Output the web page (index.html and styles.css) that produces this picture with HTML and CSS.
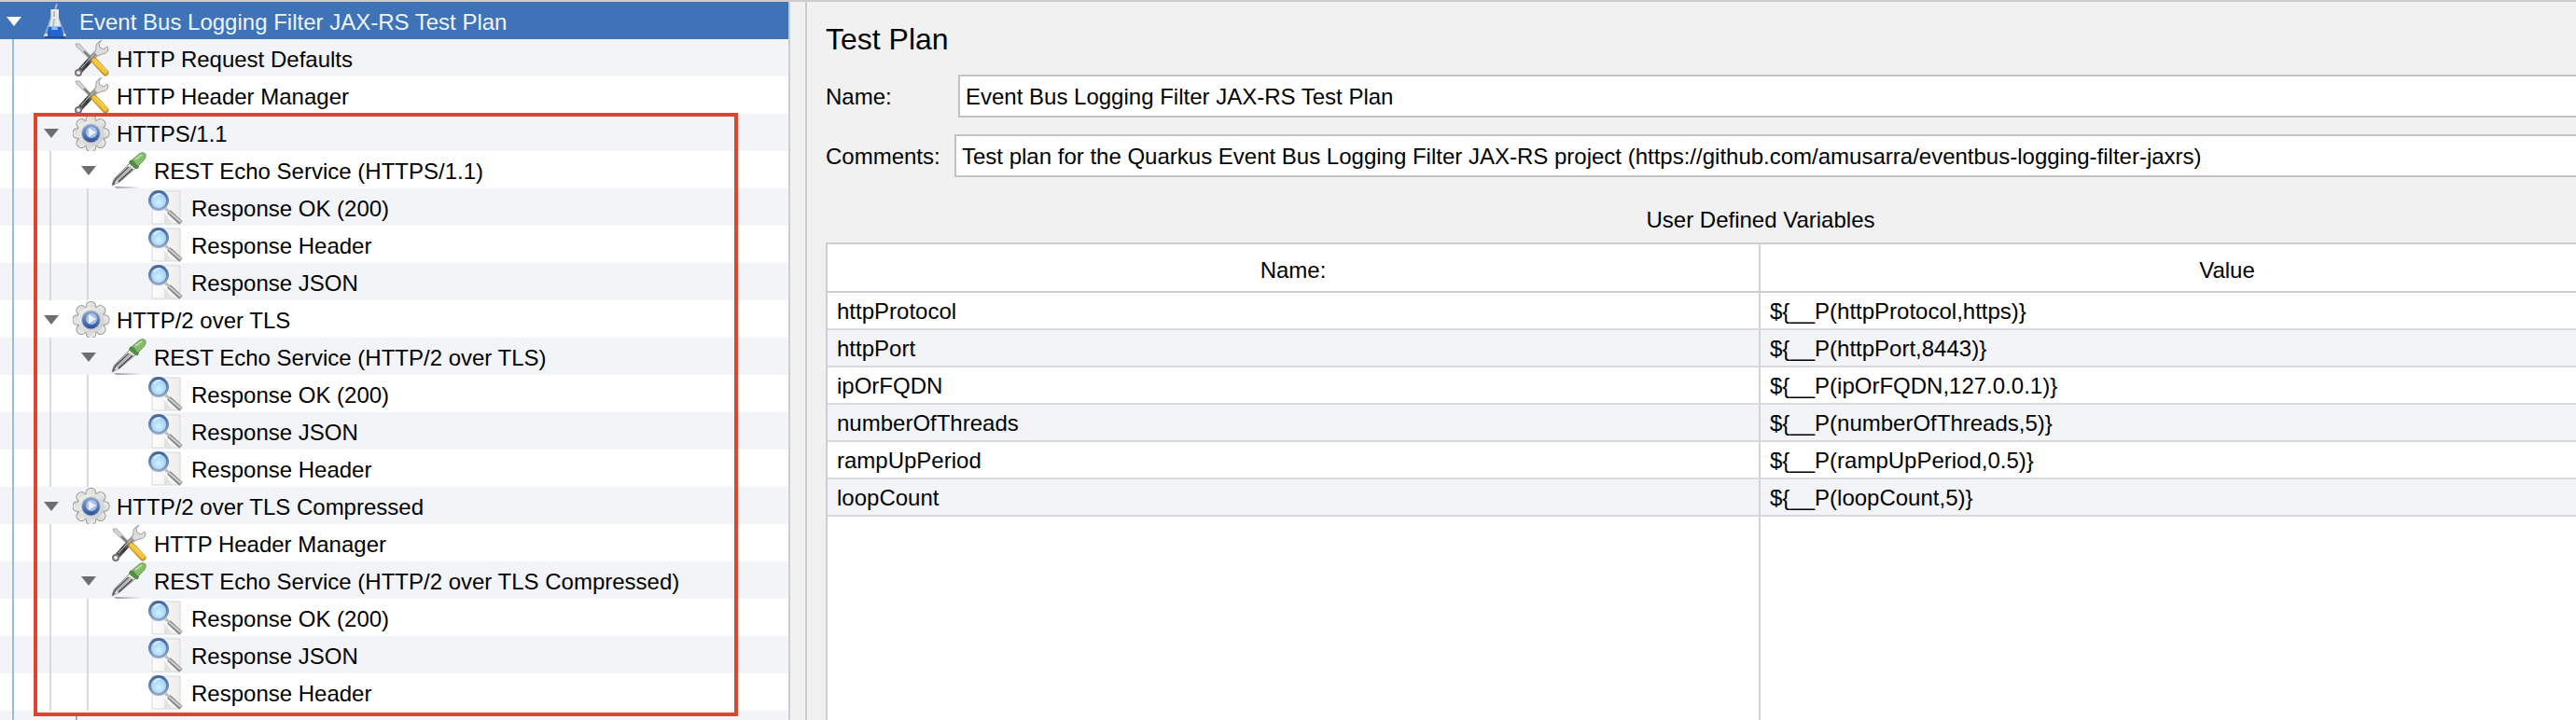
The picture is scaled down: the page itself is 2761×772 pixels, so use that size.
FILE: index.html
```html
<!DOCTYPE html>
<html lang="en">
<head>
<meta charset="utf-8">
<title>Event Bus Logging Filter JAX-RS Test Plan</title>
<link rel="stylesheet" href="styles.css">
</head>
<body>
<svg class="sprite" aria-hidden="true">
  <defs>
    <linearGradient id="glass" x1="0" x2="1"><stop offset="0" stop-color="#7f9fd0"/><stop offset=".5" stop-color="#f4f6f4"/><stop offset="1" stop-color="#7595c6"/></linearGradient>
    <linearGradient id="metal" x1="0" y1="0" x2="1" y2="1"><stop offset="0" stop-color="#f2f2f2"/><stop offset="1" stop-color="#cbcbc9"/></linearGradient>
    <linearGradient id="hub" x1="0" y1="0" x2="0" y2="1"><stop offset="0" stop-color="#8aa6d4"/><stop offset="1" stop-color="#2f5199"/></linearGradient>
    <linearGradient id="grip" gradientUnits="userSpaceOnUse" x1="30" y1="10" x2="5" y2="37"><stop offset="0" stop-color="#c4c4c4"/><stop offset=".35" stop-color="#8a8a8a"/><stop offset=".6" stop-color="#343434"/><stop offset="1" stop-color="#6a6a6a"/></linearGradient>
    <radialGradient id="lens" cx=".5" cy=".6" r=".6"><stop offset="0" stop-color="#d2f0ff"/><stop offset="1" stop-color="#94c8f0"/></radialGradient>
    <linearGradient id="ring" x1="0" y1="0" x2="0" y2="1"><stop offset="0" stop-color="#45659f"/><stop offset="1" stop-color="#8fa9c9"/></linearGradient>
    <linearGradient id="sheet" x1="0" x2="1"><stop offset="0" stop-color="#fdfdfd"/><stop offset="1" stop-color="#ededed"/></linearGradient>
    <linearGradient id="shade" x1="0" x2="1"><stop offset="0" stop-color="#9b9b9b"/><stop offset="1" stop-color="#9b9b9b" stop-opacity="0"/></linearGradient>
    <path id="tooth" d="M14 12 15 5q1-3 4-3h1q3 0 4 3l1 7z"/>
    <g id="teeth">
      <use href="#tooth"/><use href="#tooth" transform="rotate(45 19.500 21)"/><use href="#tooth" transform="rotate(90 19.500 21)"/><use href="#tooth" transform="rotate(135 19.500 21)"/><use href="#tooth" transform="rotate(180 19.500 21)"/><use href="#tooth" transform="rotate(225 19.500 21)"/><use href="#tooth" transform="rotate(270 19.500 21)"/><use href="#tooth" transform="rotate(315 19.500 21)"/>
      <circle cx="19.500" cy="21" r="14"/>
    </g>
  </defs>
  <symbol id="flask" viewBox="0 0 40 40">
    <path d="M21 9 23 2" stroke="#9fb9dc" stroke-width="2"/>
    <path d="M16 8h9v9l8 19q0 2-2 2H11q-3 0-2-2l7-19z" fill="url(#glass)" fill-opacity=".7"/>
    <path d="M17 8h8v10l2 8H15l2-8z" fill="#e4e8ea"/>
    <path d="M20 10v6M20 18l-1 8" stroke="#b7bbb9" stroke-width="2"/>
    <path d="M14 27h14l2 10H12z" fill="#2463cc"/>
    <path d="M18 26h5l1 4h-7z" fill="#8fbcf8"/>
    <path d="M10 34h3v3h-4zM30 34h2l1 3h-3z" fill="#d7d9d8"/>
    <path d="M10 38h22" stroke="#1d4ea8" stroke-width="2"/>
  </symbol>
  <symbol id="tools" viewBox="0 0 40 40">
    <path d="M3 5 7 5 20 19 18 21 4 8z" fill="#d5d5d5" stroke="#a9a9a9"/>
    <path d="M12 13 20 21" stroke="#777" stroke-width="2"/>
    <path d="M6 36 26 14" stroke="url(#grip)" stroke-width="6" stroke-linecap="round"/>
    <path d="M9 31 22 17" stroke="#dadada" stroke-width="1"/>
    <path d="M28 3q-4 2-3 8l-2 4 4 3 4-2q6 0 7-5l-1-3-4 3-4-2-1-4 3-4z" fill="#dedede" stroke="#9b9b9b"/>
    <circle cx="6" cy="36" r="3" fill="#f0f0f0" stroke="#777" stroke-width="2"/>
    <path d="M23 23 35 36" stroke="#bd922a" stroke-width="7" stroke-linecap="round"/>
    <path d="M23 23 35 35" stroke="#f3c336" stroke-width="5" stroke-linecap="round"/>
    <path d="M24 22 34 32" stroke="#ffe27a"/>
  </symbol>
  <symbol id="gear" viewBox="0 0 40 40">
    <use href="#teeth" fill="none" stroke="#9c9c9a" stroke-width="2"/>
    <use href="#teeth" fill="url(#metal)"/>
    <circle cx="19.500" cy="21" r="10.500" fill="#b8bfcc"/>
    <circle cx="19.500" cy="21" r="9.500" fill="url(#hub)"/>
    <circle cx="20" cy="20" r="6" fill="#a9c0e4"/>
    <path d="M17 15 25 20 17 25z" fill="#e9f0fa"/>
  </symbol>
  <symbol id="dropper" viewBox="0 0 40 40">
    <path d="M4 38h30l-6 2H7z" fill="url(#shade)"/>
    <path d="M2 37 4 30 23 11 29 17 10 33 4 36z" fill="#e9ebe9" stroke="#9a9a9a"/>
    <path d="M3 36 6 30 20 17M9 33 24 19" stroke="#5e5e5e" stroke-width="2" fill="none"/>
    <path d="M7 32 22 17" stroke="#b5b5b5" stroke-width="2"/>
    <path d="M21 10 24 9 31 16 30 19 27 19 20 13z" fill="#528b48"/>
    <path d="M24 9 31 3q4-3 7 0 1 4-2 7l-6 6z" fill="#85bd6c" stroke="#6fa45c"/>
    <path d="M27 9 34 4" stroke="#b7dfa2" stroke-width="2"/>
  </symbol>
  <symbol id="magnifier" viewBox="0 0 40 40">
    <path d="M5 3h30v35H5z" fill="url(#sheet)" stroke="#d6d6d6"/>
    <path d="M18 27 27 38H18z" fill="#e2e2e2"/>
    <circle cx="12" cy="13" r="9.500" fill="url(#lens)" stroke="url(#ring)" stroke-width="3"/>
    <path d="M7 10q2-4 7-4" stroke="#d9efff" stroke-width="2" fill="none"/>
    <path d="M19 21 24 26" stroke="#bdbdbd" stroke-width="3"/>
    <path d="M23 25 36 37" stroke="#858585" stroke-width="5"/>
    <path d="M23 25 36 36" stroke="#d2d2d2" stroke-width="2"/>
  </symbol>
  <symbol id="report" viewBox="0 0 40 40">
    <path d="M4 5v33" stroke="#a9a9a9" stroke-width="2"/>
  </symbol>
  <symbol id="arrow" viewBox="0 0 18 10"><path d="M1 0H17L9 10z" fill="currentColor"/></symbol>
</svg>

<main class="window">
  <nav class="tree-pane" aria-label="Test plan elements">
    <ul class="tree" role="tree">
      <li class="node selected" role="treeitem" aria-level="1" aria-selected="true"><button class="toggle" aria-label="Collapse"><svg><use href="#arrow"/></svg></button><svg class="icon"><use href="#flask"/></svg><span class="label">Event Bus Logging Filter JAX-RS Test Plan</span></li>
      <li class="node" role="treeitem" aria-level="2"><i class="guide root"></i><span class="toggle"></span><svg class="icon"><use href="#tools"/></svg><span class="label">HTTP Request Defaults</span></li>
      <li class="node" role="treeitem" aria-level="2"><i class="guide root"></i><span class="toggle"></span><svg class="icon"><use href="#tools"/></svg><span class="label">HTTP Header Manager</span></li>
      <li class="node" role="treeitem" aria-level="2"><i class="guide root"></i><button class="toggle" aria-label="Collapse"><svg><use href="#arrow"/></svg></button><svg class="icon"><use href="#gear"/></svg><span class="label">HTTPS/1.1</span></li>
      <li class="node" role="treeitem" aria-level="3"><i class="guide root"></i><i class="guide"></i><button class="toggle" aria-label="Collapse"><svg><use href="#arrow"/></svg></button><svg class="icon"><use href="#dropper"/></svg><span class="label">REST Echo Service (HTTPS/1.1)</span></li>
      <li class="node" role="treeitem" aria-level="4"><i class="guide root"></i><i class="guide"></i><i class="guide"></i><span class="toggle"></span><svg class="icon"><use href="#magnifier"/></svg><span class="label">Response OK (200)</span></li>
      <li class="node" role="treeitem" aria-level="4"><i class="guide root"></i><i class="guide"></i><i class="guide"></i><span class="toggle"></span><svg class="icon"><use href="#magnifier"/></svg><span class="label">Response Header</span></li>
      <li class="node" role="treeitem" aria-level="4"><i class="guide root"></i><i class="guide"></i><i class="guide"></i><span class="toggle"></span><svg class="icon"><use href="#magnifier"/></svg><span class="label">Response JSON</span></li>
      <li class="node" role="treeitem" aria-level="2"><i class="guide root"></i><button class="toggle" aria-label="Collapse"><svg><use href="#arrow"/></svg></button><svg class="icon"><use href="#gear"/></svg><span class="label">HTTP/2 over TLS</span></li>
      <li class="node" role="treeitem" aria-level="3"><i class="guide root"></i><i class="guide"></i><button class="toggle" aria-label="Collapse"><svg><use href="#arrow"/></svg></button><svg class="icon"><use href="#dropper"/></svg><span class="label">REST Echo Service (HTTP/2 over TLS)</span></li>
      <li class="node" role="treeitem" aria-level="4"><i class="guide root"></i><i class="guide"></i><i class="guide"></i><span class="toggle"></span><svg class="icon"><use href="#magnifier"/></svg><span class="label">Response OK (200)</span></li>
      <li class="node" role="treeitem" aria-level="4"><i class="guide root"></i><i class="guide"></i><i class="guide"></i><span class="toggle"></span><svg class="icon"><use href="#magnifier"/></svg><span class="label">Response JSON</span></li>
      <li class="node" role="treeitem" aria-level="4"><i class="guide root"></i><i class="guide"></i><i class="guide"></i><span class="toggle"></span><svg class="icon"><use href="#magnifier"/></svg><span class="label">Response Header</span></li>
      <li class="node" role="treeitem" aria-level="2"><i class="guide root"></i><button class="toggle" aria-label="Collapse"><svg><use href="#arrow"/></svg></button><svg class="icon"><use href="#gear"/></svg><span class="label">HTTP/2 over TLS Compressed</span></li>
      <li class="node" role="treeitem" aria-level="3"><i class="guide root"></i><i class="guide"></i><span class="toggle"></span><svg class="icon"><use href="#tools"/></svg><span class="label">HTTP Header Manager</span></li>
      <li class="node" role="treeitem" aria-level="3"><i class="guide root"></i><i class="guide"></i><button class="toggle" aria-label="Collapse"><svg><use href="#arrow"/></svg></button><svg class="icon"><use href="#dropper"/></svg><span class="label">REST Echo Service (HTTP/2 over TLS Compressed)</span></li>
      <li class="node" role="treeitem" aria-level="4"><i class="guide root"></i><i class="guide"></i><i class="guide"></i><span class="toggle"></span><svg class="icon"><use href="#magnifier"/></svg><span class="label">Response OK (200)</span></li>
      <li class="node" role="treeitem" aria-level="4"><i class="guide root"></i><i class="guide"></i><i class="guide"></i><span class="toggle"></span><svg class="icon"><use href="#magnifier"/></svg><span class="label">Response JSON</span></li>
      <li class="node" role="treeitem" aria-level="4"><i class="guide root"></i><i class="guide"></i><i class="guide"></i><span class="toggle"></span><svg class="icon"><use href="#magnifier"/></svg><span class="label">Response Header</span></li>
      <li class="node" role="treeitem" aria-level="2"><i class="guide root"></i><span class="toggle"></span><svg class="icon"><use href="#report"/></svg></li>
    </ul>
    <div class="highlight"></div>
  </nav>
  <div class="splitter"></div>
  <section class="detail">
    <div class="form">
      <h1 class="title">Test Plan</h1>
      <div class="field name">
        <label for="plan-name">Name:</label>
        <input id="plan-name" type="text" value="Event Bus Logging Filter JAX-RS Test Plan">
      </div>
      <div class="field comments">
        <label for="plan-comments">Comments:</label>
        <input id="plan-comments" type="text" value="Test plan for the Quarkus Event Bus Logging Filter JAX-RS project (https://github.com/amusarra/eventbus-logging-filter-jaxrs)">
      </div>
      <h2 class="subtitle" id="vars">User Defined Variables</h2>
      <div class="table-wrap">
        <table class="variables" aria-labelledby="vars">
          <thead><tr><th>Name:</th><th>Value</th></tr></thead>
          <tbody>
            <tr><td>httpProtocol</td><td>${__P(httpProtocol,https)}</td></tr>
            <tr><td>httpPort</td><td>${__P(httpPort,8443)}</td></tr>
            <tr><td>ipOrFQDN</td><td>${__P(ipOrFQDN,127.0.0.1)}</td></tr>
            <tr><td>numberOfThreads</td><td>${__P(numberOfThreads,5)}</td></tr>
            <tr><td>rampUpPeriod</td><td>${__P(rampUpPeriod,0.5)}</td></tr>
            <tr><td>loopCount</td><td>${__P(loopCount,5)}</td></tr>
          </tbody>
        </table>
        <div class="empty"></div>
      </div>
    </div>
  </section>
</main>
</body>
</html>
```
FILE: styles.css
```css
* { box-sizing: border-box; }

body {
  margin: 0;
  overflow: hidden;
  background: #f1f1f1;
  color: #000;
  font: 24px/38px "Liberation Sans", Arial, sans-serif;
}

.sprite { position: absolute; width: 0; height: 0; }

.window {
  display: grid;
  grid-template-columns: minmax(600px, 845px) 20px minmax(0, 1fr);
  grid-template-rows: minmax(0, 1fr);
  height: 100vh;
  border-top: 2px solid #cdcdcd;
}

/* Tree */
.tree-pane { position: relative; overflow: hidden; background: #fff; }
.tree { margin: 0; padding: 0; list-style: none; }
.node { display: flex; height: 40px; white-space: nowrap; }
.node:nth-child(even) { background: #f3f4f8; }
.node.selected { background: #3f73b8; color: #eff4fb; }
.guide { flex: none; width: 27px; margin-left: 13px; border-left: 2px solid #d9d9d9; }
.guide.root { border-color: #99bbdf; }
.toggle {
  flex: none;
  display: flex;
  justify-content: center;
  width: 29px;
  margin: 0 9px 0 0;
  padding: 16px 0 0;
  border: 0;
  background: none;
  color: #6e6e6e;
}
.toggle svg { width: 18px; height: 10px; }
.selected .toggle { color: #fff; }
.icon { flex: none; width: 40px; height: 40px; }
.label { padding: 3px 0 0 7px; }

.highlight {
  position: absolute;
  top: 119px;
  left: 36px;
  right: 54px;
  height: 647px;
  border: 4px solid #df452c;
}

.splitter {
  border: solid #cdcdcd;
  border-width: 0 2px;
}

/* Detail */
.detail { overflow: hidden; }
.form {
  display: flex;
  flex-direction: column;
  width: calc(100% + 128px);
  height: 100%;
  padding: 20px 0 0 20px;
}
.title { margin: 0 0 18px; font-size: 32px; line-height: 40px; font-weight: 400; }
.field { display: flex; align-items: center; margin-bottom: 18px; }
.field label { flex: none; padding-top: 2px; }
.name label { width: 142px; }
.comments label { width: 138px; }
.field input {
  flex: 1;
  min-width: 0;
  height: 46px;
  margin: 0;
  padding: 2px 6px 0;
  border: 2px solid #c2c2c2;
  background: #fff;
  color: inherit;
  font: inherit;
}
.subtitle { margin: 9px 0 5px; font-size: 24px; line-height: 38px; font-weight: 400; text-align: center; }

.table-wrap {
  flex: 1;
  display: flex;
  flex-direction: column;
  border: 2px solid #cdcdcd;
  border-bottom: 0;
  background: #fff;
}
.variables { width: 100%; border-spacing: 0; table-layout: fixed; }
.variables th {
  height: 52px;
  padding: 6px 0 0;
  border-bottom: 2px solid #cdcdcd;
  font-weight: 400;
  line-height: 44px;
}
.variables td {
  height: 40px;
  padding: 2px 10px 0;
  border-bottom: 2px solid #dadada;
  line-height: 36px;
}
.variables th:first-child, .variables td:first-child { border-right: 2px solid #d4d4d4; }
.variables tbody tr:nth-child(even) { background: #f3f4f8; }
.empty { flex: 1; width: 50%; border-right: 2px solid #d4d4d4; }
```
